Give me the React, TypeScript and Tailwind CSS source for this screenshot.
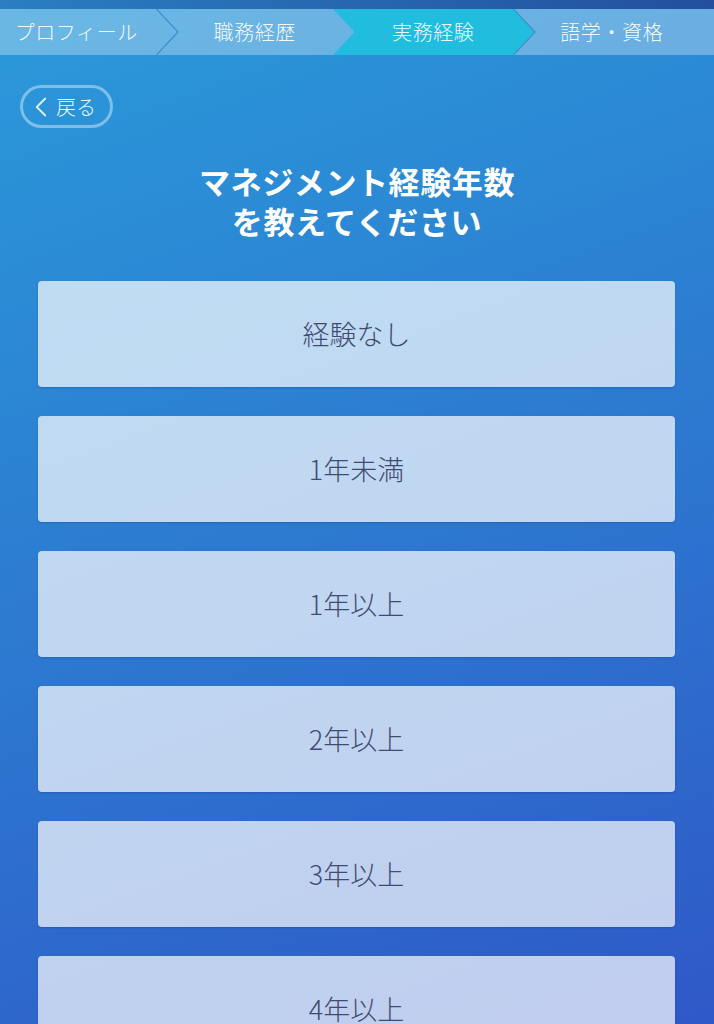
import { ChevronLeft } from "lucide-react";

const STEPS = ["プロフィール", "職務経歴", "実務経験", "語学・資格"];
const ACTIVE = 2;

const OPTIONS = ["経験なし", "1年未満", "1年以上", "2年以上", "3年以上", "4年以上"];

function StepBar() {
  return (
    <div className="grid h-[46px] grid-cols-4 bg-white/30">
      {STEPS.map((label, i) => (
        <div key={label} className="relative flex items-center justify-center pr-[26px]">
          {i === ACTIVE && (
            <div className="absolute inset-y-0 left-[-24px] right-0 bg-[#20bddf] [clip-path:polygon(0_0,calc(100%-22px)_0,100%_50%,calc(100%-22px)_100%,0_100%,22px_50%)]" />
          )}
          {i < STEPS.length - 1 && (
            <svg
              className="absolute inset-y-0 right-0 h-full w-[23px]"
              viewBox="0 0 23 46"
              preserveAspectRatio="none"
            >
              <polyline
                points="0.5,0 22,23 0.5,46"
                fill="none"
                stroke="#3f8fcb"
                strokeWidth="1.2"
              />
            </svg>
          )}
          <span className="relative text-[20px] font-light tracking-[0.6px] text-white/95">
            {label}
          </span>
        </div>
      ))}
    </div>
  );
}

export default function App() {
  return (
    <div className="min-h-screen bg-linear-160 from-[#2a9ad9] to-[#2f56c7] font-['Noto_Sans_CJK_JP','Noto_Sans',sans-serif]">
      <div className="h-[9px] bg-linear-to-r from-[#2a7ec2] to-[#234f9e]" />
      <StepBar />

      <div className="px-[20px] pt-[30px]">
        <button
          type="button"
          className="flex h-[43px] w-[93px] items-center rounded-full border-[3px] border-white/40 pl-[1px] text-white/95"
        >
          <ChevronLeft size={34} strokeWidth={1.3} className="text-white/85" />
          <span className="-ml-[2px] text-[20px] font-light leading-none">戻る</span>
        </button>
      </div>

      <h1 className="mt-[33px] text-center text-[31px] font-bold tracking-[0.6px] text-white">
        <span className="block leading-[40px]">マネジメント経験年数</span>
        <span className="block leading-[40px]">を教えてください</span>
      </h1>

      <div className="mt-[40px] flex flex-col gap-[29px] pl-[38px] pr-[39px]">
        {OPTIONS.map((opt) => (
          <button
            key={opt}
            type="button"
            className="flex h-[106px] items-center justify-center rounded-[4px] bg-white/70 text-[27px] font-light text-[#3e4b72] shadow-[0_1px_2px_rgba(20,40,110,0.25)]"
          >
            {opt}
          </button>
        ))}
      </div>
    </div>
  );
}
